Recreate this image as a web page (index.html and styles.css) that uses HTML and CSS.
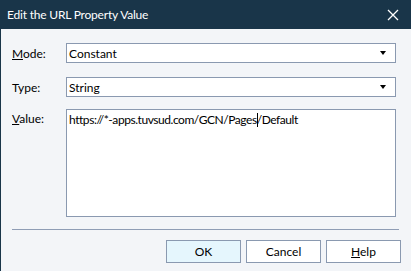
FILE: index.html
```html
<!DOCTYPE html>
<html lang="en">
<head>
    <meta charset="UTF-8">
    <meta name="viewport" content="width=device-width, initial-scale=1.0">
    <title>Edit the URL Property Value</title>
    <link rel="stylesheet" href="styles.css">
</head>
<body>
    <div class="dialog">
        <div class="titlebar">
            <span class="title">Edit the URL Property Value</span>
            <span class="close-btn">
                <svg width="12" height="12" viewBox="0 0 12 12">
                    <path d="M1 1 L11 11 M11 1 L1 11" stroke="#ffffff" stroke-width="1.3" fill="none"/>
                </svg>
            </span>
        </div>
        <div class="dialog-body">
            <div class="field-row">
                <label class="field-label"><u>M</u>ode:</label>
                <div class="select-box">
                    <span>Constant</span>
                    <span class="arrow"></span>
                </div>
            </div>
            <div class="field-row">
                <label class="field-label">Type:</label>
                <div class="select-box">
                    <span>String</span>
                    <span class="arrow"></span>
                </div>
            </div>
            <div class="field-row value-row">
                <label class="field-label"><u>V</u>alue:</label>
                <div class="text-area">https://*-apps.tuvsud.com/GCN/Pages<span class="caret"></span>/Default</div>
            </div>
            <div class="separator"></div>
            <div class="button-row">
                <button class="btn btn-default">OK</button>
                <button class="btn">Cancel</button>
                <button class="btn"><u>H</u>elp</button>
            </div>
        </div>
    </div>
</body>
</html>
```

FILE: styles.css
```css
* {
    margin: 0;
    padding: 0;
    box-sizing: border-box;
    font-family: Lato, 'Liberation Sans', sans-serif;
}

body {
    width: 411px;
    height: 271px;
    overflow: hidden;
    background-color: #f3f5f8;
}

.dialog {
    width: 411px;
    height: 271px;
    border-left: 1px solid #193549;
    background-color: #f3f5f8;
}

.titlebar {
    height: 29px;
    background-color: #193549;
    display: flex;
    align-items: center;
    justify-content: space-between;
    padding-left: 6px;
    padding-right: 12px;
}

.title {
    color: #ffffff;
    font-size: 12px;
    letter-spacing: -0.2px;
}

.close-btn {
    display: flex;
    align-items: center;
    margin-top: 1px;
}

.dialog-body {
    padding: 14px 10px 0 11px;
}

.field-row {
    display: flex;
    align-items: center;
    margin-bottom: 14px;
}

.field-row + .field-row {
    margin-bottom: 12px;
}

.field-label {
    width: 54px;
    font-size: 12px;
    color: #000;
}

.select-box {
    width: 330px;
    height: 20px;
    border: 1px solid #8a99b0;
    background-color: #fff;
    display: flex;
    align-items: center;
    justify-content: space-between;
    padding: 0 9px 0 2px;
    font-size: 12px;
}

.arrow {
    width: 0;
    height: 0;
    border-left: 3.5px solid transparent;
    border-right: 3.5px solid transparent;
    border-top: 4px solid #000;
}

.value-row {
    align-items: flex-start;
    margin-bottom: 0;
}

.value-row .field-label {
    padding-top: 2px;
}

.text-area {
    width: 330px;
    height: 108px;
    border: 1px solid #8a99b0;
    background-color: #fff;
    padding: 2px 2px;
    font-size: 12px;
    letter-spacing: -0.45px;
}

.caret {
    display: inline-block;
    width: 1px;
    height: 14px;
    background-color: #000;
    vertical-align: -3px;
    margin-right: -1px;
}

.separator {
    width: 387px;
    height: 1px;
    background-color: #8f9db5;
    margin-top: 12px;
}

.button-row {
    display: flex;
    justify-content: flex-end;
    gap: 5px;
    margin-top: 10px;
}

.btn {
    width: 75px;
    height: 23px;
    border: 1px solid #8a99b0;
    background-color: #fff;
    font-size: 12px;
    color: #000;
}

.btn-default {
    background-color: #e5f6fd;
}
```
